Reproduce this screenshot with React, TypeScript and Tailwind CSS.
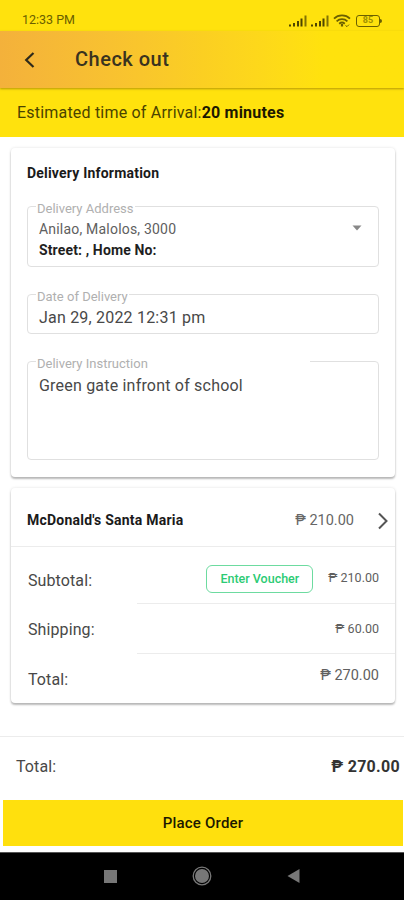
import React from 'react';

function SignalBars() {
    return (
        <svg width="20" height="12" viewBox="0 0 20 12" fill="#4d4500">
            <rect x="1" y="9.5" width="2" height="2" />
            <rect x="5" y="8" width="2" height="3.5" />
            <rect x="9" y="6" width="2" height="5.5" />
            <rect x="12.5" y="3.5" width="2" height="8" />
            <rect x="16.5" y="0.5" width="2" height="11" opacity="0.7" />
        </svg>
    );
}

function WifiIcon() {
    return (
        <svg width="18" height="14" viewBox="0 0 18 14" fill="none" stroke="#6b6000" strokeWidth="1.8">
            <path d="M1 4.6C5.4 0.4 12.6 0.4 17 4.6" />
            <path d="M3.6 7.3C6.6 4.5 11.4 4.5 14.4 7.3" />
            <path d="M6.2 9.7C7.8 8.3 10.2 8.3 11.8 9.7" />
            <path d="M9 10L9 12.5" strokeWidth="2.2" />
            <path d="M12.5 11.5L14 12.6L16 10.6" strokeWidth="1" />
        </svg>
    );
}

function Battery() {
    return (
        <div className="flex items-center">
            <div className="flex h-[12px] w-[24px] items-center justify-center rounded-[3px] border border-[#6b6000]">
                <span className="text-[9px] leading-none font-bold text-[#a09000]">85</span>
            </div>
            <div className="h-[4px] w-[2px] rounded-r-sm bg-[#6b6000]" />
        </div>
    );
}

type FieldProps = {
    label: string;
    className: string;
    legendClassName?: string;
    children: React.ReactNode;
};

function Field({ label, className, legendClassName = '', children }: FieldProps) {
    return (
        <fieldset className={`rounded-[4px] border-[1.5px] border-[#e0e0e0] ${className}`}>
            <legend className={`ml-[8px] h-[4px] pr-[1px] pl-[1px] text-[13px] leading-[10px] whitespace-nowrap text-[#b0b0b0] ${legendClassName}`}>
                {label}
            </legend>
            {children}
        </fieldset>
    );
}

export default function App() {
    const rows = [
        { label: 'Subtotal:', value: '₱ 210.00', voucher: true, className: 'h-[57px]', labelClassName: 'pt-[10px]', valueClassName: 'pt-[3px]' },
        { label: 'Shipping:', value: '₱ 60.00', className: 'h-[50px]', labelClassName: 'pt-[2px]', valueClassName: 'pt-[1px]' },
        { label: 'Total:', value: '₱ 270.00', className: 'h-[50px]', labelClassName: 'pt-px', valueClassName: 'text-[14.5px] pb-[6px]' },
    ];

    return (
        <main className="flex h-[900px] w-[404px] flex-col overflow-hidden bg-white font-['Roboto',sans-serif] text-[#333]">
            <div className="flex h-[31px] shrink-0 items-center justify-between bg-[#ffe20d] pt-[9px] pr-[22px] pl-[22px]">
                <span className="pt-px text-[12.5px] text-[#6a5f00]">12:33 PM</span>
                <div className="flex items-center gap-[3px] pt-px">
                    <div className="flex gap-[2px]">
                        <SignalBars />
                        <SignalBars />
                    </div>
                    <WifiIcon />
                    <div className="ml-[2px]"><Battery /></div>
                </div>
            </div>

            <header className="z-10 flex h-[57px] shrink-0 items-center bg-linear-to-r from-[#f4b13b] via-[#fbcf22] via-50% to-[#ffe20d] to-80% pl-[24px] shadow-[0_1px_2px_rgba(120,90,0,0.55)]">
                <svg width="12" height="18" viewBox="0 0 12 18" fill="none" stroke="#2f2a1a" strokeWidth="2.2">
                    <path d="M9.5 2L2.2 9L9.5 16" />
                </svg>
                <h1 className="ml-[39px] pb-[2px] text-[20px] font-medium tracking-[0.5px] text-[#3a331f]">Check out</h1>
            </header>

            <div className="flex h-[49px] shrink-0 items-center bg-[#ffe20d] pt-px pl-[17px] text-[16px] tracking-[0.2px] text-[#4a4300]">
                Estimated time of Arrival:<b className="font-bold text-[#1c1900]">20 minutes</b>
            </div>

            <section className="mx-[11px] mr-[9px] mt-[11px] h-[329px] shrink-0 rounded-[4px] px-[16px] pt-[15px] shadow-[0_2px_2px_rgba(0,0,0,0.25),0_0_3px_rgba(0,0,0,0.12)]">
                <h2 className="h-[41px] text-[14px] leading-[20px] font-bold tracking-[0.2px] text-[#1a1a1a]">Delivery Information</h2>
                <Field label="Delivery Address" className="h-[63px] w-[352px]">
                    <div className="flex justify-between pt-[11px] pr-[16px] pl-[11px]">
                        <div className="text-[14px] leading-[21px]">
                            <p className="tracking-[0.2px] text-[#606060]">Anilao, Malolos, 3000</p>
                            <p className="font-bold tracking-[0.13px] text-[#1f1f1f]">Street: , Home No:</p>
                        </div>
                        <svg className="mt-[6px]" width="10" height="6" viewBox="0 0 10 6" fill="#888">
                            <path d="M0.5 0.5H9.5L5 5.5Z" />
                        </svg>
                    </div>
                </Field>
                <Field label="Date of Delivery" className="mt-[25px] h-[42px] w-[352px]">
                    <p className="pt-[10px] pl-[11px] text-[16px] leading-[24px] tracking-[0.2px] text-[#484848]">Jan 29, 2022 12:31 pm</p>
                </Field>
                <Field label="Delivery Instruction" className="mt-[25px] h-[101px] w-[352px]" legendClassName="w-[274px]">
                    <p className="pt-[11px] pl-[11px] text-[16px] leading-[24px] tracking-[0.2px] text-[#484848]">Green gate infront of school</p>
                </Field>
            </section>

            <section className="mx-[11px] mr-[9px] mt-[11px] h-[215px] shrink-0 rounded-[4px] shadow-[0_2px_2px_rgba(0,0,0,0.25),0_0_3px_rgba(0,0,0,0.12)]">
                <div className="flex h-[59px] items-center border-b-[1.5px] border-[#ececec] pt-[7px] pr-[6px] pl-[16px]">
                    <h2 className="grow text-[14px] font-bold tracking-[0.22px] text-[#1a1a1a]">McDonald's Santa Maria</h2>
                    <span className="text-[14.5px] text-[#666]">₱ 210.00</span>
                    <svg className="ml-[23px]" width="12" height="18" viewBox="0 0 12 18" fill="none" stroke="#555" strokeWidth="2">
                        <path d="M2 1.5L9.5 9L2 16.5" />
                    </svg>
                </div>
                {rows.map((row, idx) => (
                    <div key={row.label} className="flex">
                        <span className={`flex w-[126px] items-center pl-[17px] text-[16px] tracking-[0.1px] text-[#484848] ${row.className} ${row.labelClassName}`}>
                            {row.label}
                        </span>
                        <div className={`flex grow items-center justify-end pr-[16px] text-[12.5px] ${idx < 2 ? 'border-b-[1.5px] border-[#ececec]' : ''} ${row.className} ${row.valueClassName}`}>
                            {row.voucher && (
                                <span className="mr-[15px] flex pt-[5px]">
                                    <button className="h-[28px] w-[107px] rounded-[6px] border border-[#6ddba0] text-[12.5px] font-medium text-[#2ccb74]">
                                        Enter Voucher
                                    </button>
                                </span>
                            )}
                            <span className={`text-[#606060] ${row.voucher ? 'pt-[4px]' : ''}`}>{row.value}</span>
                        </div>
                    </div>
                ))}
            </section>

            <footer className="mt-[33px] flex h-[116px] shrink-0 flex-col border-t-[1.5px] border-[#ececec]">
                <div className="flex h-[63px] items-center justify-between pr-[4px] pb-[4px] pl-[16px] text-[16px]">
                    <span className="tracking-[0.1px] text-[#484848]">Total:</span>
                    <span className="font-bold tracking-[0.3px]">₱ 270.00</span>
                </div>
                <button className="mr-[1px] ml-[3px] h-[46px] bg-[#ffe00d] text-[15px] font-medium tracking-[0.2px] text-[#1c1900]">Place Order</button>
            </footer>

            <nav className="flex grow items-center justify-center gap-[75px] border-t border-[#555] bg-black pb-px">
                <div className="h-[13px] w-[13px] bg-[#777]" />
                <svg width="20" height="20" viewBox="0 0 20 20">
                    <circle cx="10" cy="10" r="8.8" fill="none" stroke="#777" strokeWidth="1.3" />
                    <circle cx="10" cy="10" r="7" fill="#777" />
                </svg>
                <svg width="13" height="14" viewBox="0 0 13 14" fill="#777">
                    <path d="M0.5 7L12.5 0V14Z" />
                </svg>
            </nav>
        </main>
    );
}
